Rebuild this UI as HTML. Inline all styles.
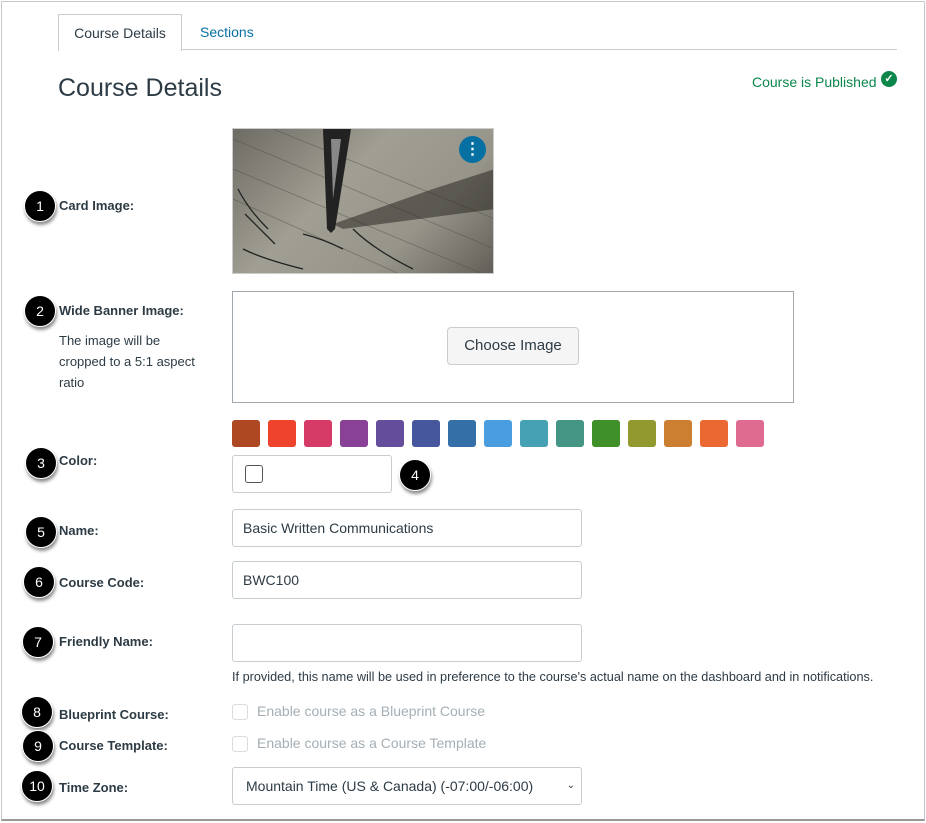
<!DOCTYPE html>
<html><head><style>
body{margin:0;width:926px;height:823px;background:#fff;font-family:"Liberation Sans",sans-serif;color:#2d3b45;position:relative;overflow:hidden}
.frame{position:absolute;left:1px;top:1px;width:922px;height:817px;border:1px solid #c8c8c8;border-bottom:2px solid #999}
.a{position:absolute}
.tab{position:absolute;left:58px;top:14px;width:122px;height:36px;border:1px solid #c7cdd1;border-bottom:none;background:#fff;font-size:14px;line-height:36px;text-align:center;color:#2d3b45}
.lbl{position:absolute;left:59px;font-size:13px;font-weight:bold;color:#2d3b45}
.inp{position:absolute;border:1px solid #c7cdd1;border-radius:3px;background:#fff;font-size:14px;color:#2d3b45;box-sizing:border-box;padding-left:10px}
.b{position:absolute;width:30px;height:30px;border-radius:50%;background:#000;color:#fff;font-size:14px;text-align:center;line-height:30px;box-shadow:1px 3px 3px rgba(0,0,0,.45);border:1px solid #fff;margin:-16px 0 0 -16px}
.sw{position:absolute;top:420px;width:28px;height:27px;border-radius:3px}
.cb{position:absolute;left:232px;width:14px;height:14px;border:1px solid #ddd;border-radius:3px}
.dis{position:absolute;left:257px;font-size:14px;color:#a5afb5}
</style></head><body>
<div class="frame"></div>
<div class="a" style="left:58px;top:49px;width:839px;height:1px;background:#c7cdd1"></div>
<div class="tab">Course Details</div>
<div class="a" style="left:200px;top:24px;font-size:14px;color:#0770a3">Sections</div>
<div class="a" style="left:58px;top:74px;font-size:25px;color:#2d3b45">Course Details</div>
<div class="a" style="left:752px;top:74px;font-size:14px;color:#0b874b">Course is Published</div>
<div class="a" style="left:881px;top:71px;width:16px;height:16px;border-radius:50%;background:#0b874b;color:#fff;font-size:11px;text-align:center;line-height:16px;font-weight:bold">✓</div>

<div class="a" style="left:232px;top:128px;width:262px;height:146px;border:1px solid #ccc;box-sizing:border-box;overflow:hidden;background:linear-gradient(135deg,#6d6b63 0%,#a19f93 40%,#97958a 70%,#615f57 100%)">
<svg width="262" height="146"><g stroke="#4d4b45" stroke-width="0.8" opacity=".5"><line x1="0" y1="10" x2="262" y2="120"/><line x1="0" y1="40" x2="262" y2="150"/><line x1="0" y1="70" x2="200" y2="160"/><line x1="40" y1="0" x2="262" y2="90"/></g>
<path d="M100 95 L200 60 L262 40 L262 80 L110 100Z" fill="#2a2823" opacity=".55"/>
<path d="M90 0 L118 0 L102 100 L98 104 L94 100Z" fill="#222"/>
<path d="M98 10 L108 10 L100 70Z" fill="#888"/>
<path d="M5 60 q10 20 30 40 M12 85 q10 10 30 30 M70 105 q20 5 40 15 M10 120 q20 10 60 20 M120 100 q20 20 60 40" stroke="#222" fill="none" stroke-width="1.3"/>
</svg></div>
<div class="a" style="left:459px;top:136px;width:27px;height:27px;border-radius:50%;background:#0770a3;color:#fff;text-align:center;font-size:16px;line-height:27px;font-weight:bold">⋮</div>

<div class="lbl" style="top:198px">Card Image:</div>
<div class="lbl" style="top:303px">Wide Banner Image:</div>
<div class="a" style="left:59px;top:330px;width:148px;font-size:13px;line-height:21px">The image will be cropped to a 5:1 aspect ratio</div>
<div class="a" style="left:232px;top:291px;width:562px;height:112px;border:1px solid #a0a8ad;box-sizing:border-box"></div>
<div class="a" style="left:447px;top:327px;width:132px;height:38px;border:1px solid #c7cdd1;border-radius:4px;background:#f5f5f5;box-sizing:border-box;font-size:15px;text-align:center;line-height:36px">Choose Image</div>

<div class="sw" style="left:232px;background:#ad4823"></div>
<div class="sw" style="left:268px;background:#ee432d"></div>
<div class="sw" style="left:304px;background:#d63a67"></div>
<div class="sw" style="left:340px;background:#884196"></div>
<div class="sw" style="left:376px;background:#644d9a"></div>
<div class="sw" style="left:412px;background:#47579e"></div>
<div class="sw" style="left:448px;background:#356fa8"></div>
<div class="sw" style="left:484px;background:#4a9ee0"></div>
<div class="sw" style="left:520px;background:#46a1b4"></div>
<div class="sw" style="left:556px;background:#449583"></div>
<div class="sw" style="left:592px;background:#3f9029"></div>
<div class="sw" style="left:628px;background:#91992f"></div>
<div class="sw" style="left:664px;background:#cc7f30"></div>
<div class="sw" style="left:700px;background:#ec6833"></div>
<div class="sw" style="left:736px;background:#df6b90"></div>

<div class="lbl" style="top:453px">Color:</div>
<div class="inp" style="left:232px;top:455px;width:160px;height:38px"></div>
<div class="a" style="left:245px;top:465px;width:16px;height:16px;border:1px solid #555;border-radius:3px"></div>

<div class="lbl" style="top:523px">Name:</div>
<div class="inp" style="left:232px;top:509px;width:350px;height:38px;line-height:36px">Basic Written Communications</div>
<div class="lbl" style="top:575px">Course Code:</div>
<div class="inp" style="left:232px;top:561px;width:350px;height:38px;line-height:36px">BWC100</div>
<div class="lbl" style="top:634px">Friendly Name:</div>
<div class="inp" style="left:232px;top:624px;width:350px;height:38px"></div>
<div class="a" style="left:232px;top:670px;font-size:12.7px;color:#2d3b45;white-space:nowrap">If provided, this name will be used in preference to the course's actual name on the dashboard and in notifications.</div>

<div class="lbl" style="top:707px">Blueprint Course:</div>
<div class="cb" style="top:704px"></div><div class="dis" style="top:703px">Enable course as a Blueprint Course</div>
<div class="lbl" style="top:738px">Course Template:</div>
<div class="cb" style="top:736px"></div><div class="dis" style="top:735px">Enable course as a Course Template</div>
<div class="lbl" style="top:780px">Time Zone:</div>
<div class="inp" style="left:232px;top:767px;width:350px;height:38px;line-height:36px;padding-left:13px">Mountain Time (US &amp; Canada) (-07:00/-06:00)<span style="position:absolute;right:6px;font-size:10px">⌄</span></div>

<div class="b" style="left:40px;top:206px">1</div>
<div class="b" style="left:40px;top:311px">2</div>
<div class="b" style="left:41px;top:463px">3</div>
<div class="b" style="left:415px;top:475px">4</div>
<div class="b" style="left:41px;top:532px">5</div>
<div class="b" style="left:39px;top:582px">6</div>
<div class="b" style="left:38px;top:642px">7</div>
<div class="b" style="left:37px;top:712px">8</div>
<div class="b" style="left:38px;top:746px">9</div>
<div class="b" style="left:37px;top:786px">10</div>
</body></html>
